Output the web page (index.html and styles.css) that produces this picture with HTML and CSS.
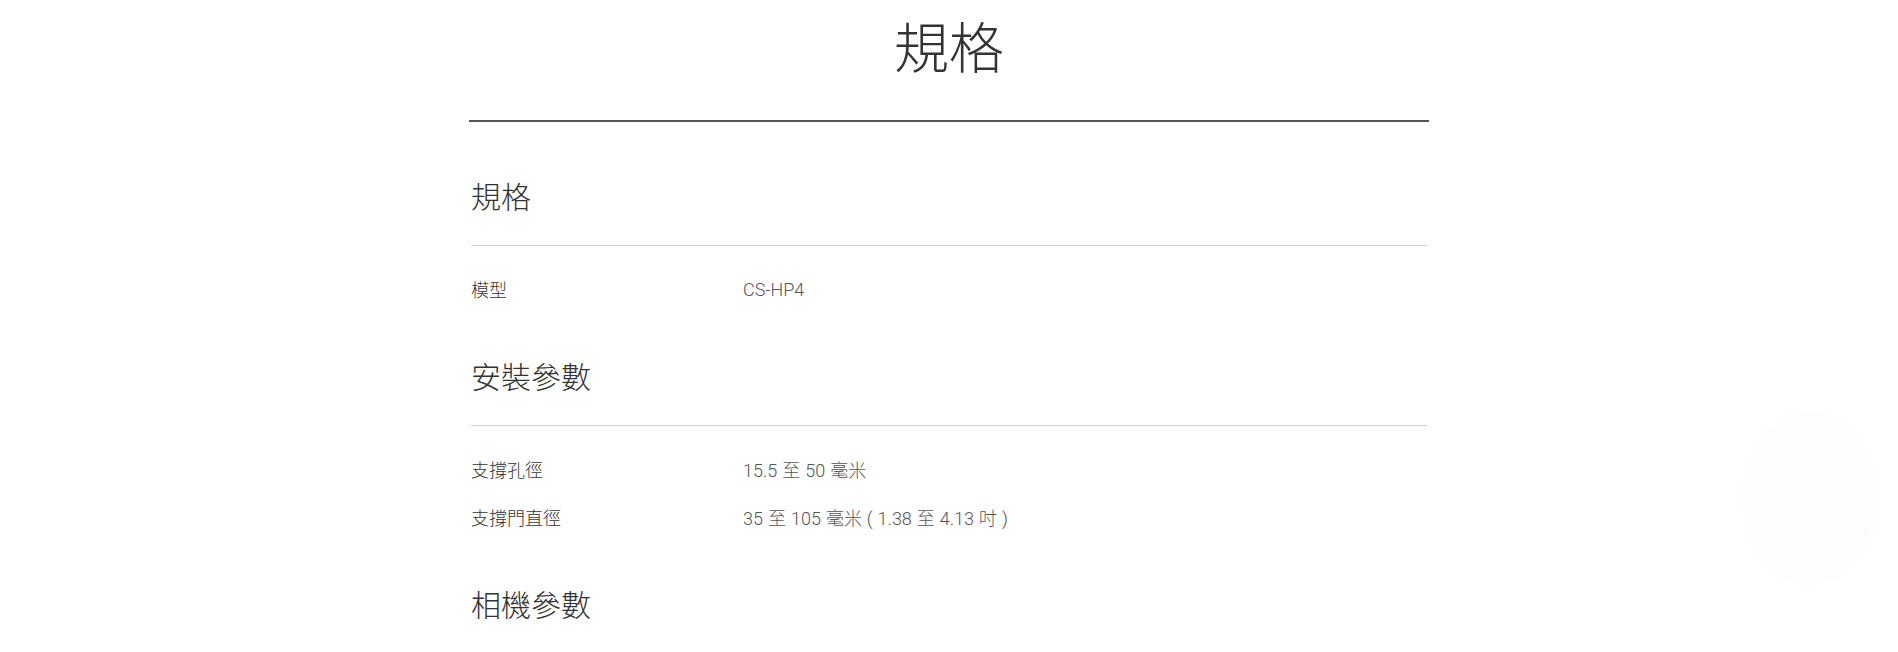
FILE: index.html
```html
<!DOCTYPE html>
<html lang="zh-Hant">
<head>
<meta charset="utf-8">
<title>規格</title>
<link rel="stylesheet" href="styles.css">
</head>
<body>
<main class="spec">
  <h1 class="spec-title">規格</h1>
  <section class="group group-first">
    <h2 class="group-title">規格</h2>
    <div class="rows">
      <div class="row"><span class="label">模型</span><span class="value">CS-HP4</span></div>
    </div>
  </section>
  <section class="group">
    <h2 class="group-title">安裝參數</h2>
    <div class="rows">
      <div class="row"><span class="label">支撐孔徑</span><span class="value">15.5 至 50 毫米</span></div>
      <div class="row"><span class="label">支撐門直徑</span><span class="value">35 至 105 毫米 ( 1.38 至 4.13 吋 )</span></div>
    </div>
  </section>
  <section class="group">
    <h2 class="group-title">相機參數</h2>
  </section>
</main>
<div class="float-blob"></div>
</body>
</html>
```
FILE: styles.css
```css
html, body {
  margin: 0;
  padding: 0;
  background: #ffffff;
}
body {
  font-family: Roboto, "Noto Sans CJK TC", sans-serif;
  color: #333333;
  overflow: hidden;
  height: 652px;
}
.spec {
  width: 960px;
  margin: 0 auto;
}
.spec-title {
  margin: 0;
  padding: 11px 0 43px;
  font-size: 55px;
  line-height: 66px;
  font-weight: 300;
  text-align: center;
  color: #333333;
  border-bottom: 2px solid #555555;
  font-family: "Noto Sans CJK TC", sans-serif;
}
.group {
  margin: 0 2px;
}
.group-first {
  padding-top: 11px;
}
.group-title {
  margin: 0;
  padding: 41px 0 29px;
  font-size: 30px;
  line-height: 42px;
  font-weight: 300;
  color: #333333;
  border-bottom: 1px solid #d2d2d2;
  font-family: "Noto Sans CJK TC", sans-serif;
}
.rows {
  padding-top: 19px;
}
.row {
  display: flex;
  height: 48px;
  align-items: center;
  font-size: 18px;
  font-weight: 300;
}
.label {
  width: 272px;
  flex: none;
  color: #333333;
  font-family: "Noto Sans CJK TC", sans-serif;
}
.value {
  color: #555555;
  font-family: Roboto, "Noto Sans CJK TC", sans-serif;
  word-spacing: 0.6px;
}
.float-blob {
  position: absolute;
  left: 1742px;
  top: 410px;
  width: 136px;
  height: 176px;
  border-radius: 50%;
  background: #fdfdfd;
  filter: blur(4px);
}
```
